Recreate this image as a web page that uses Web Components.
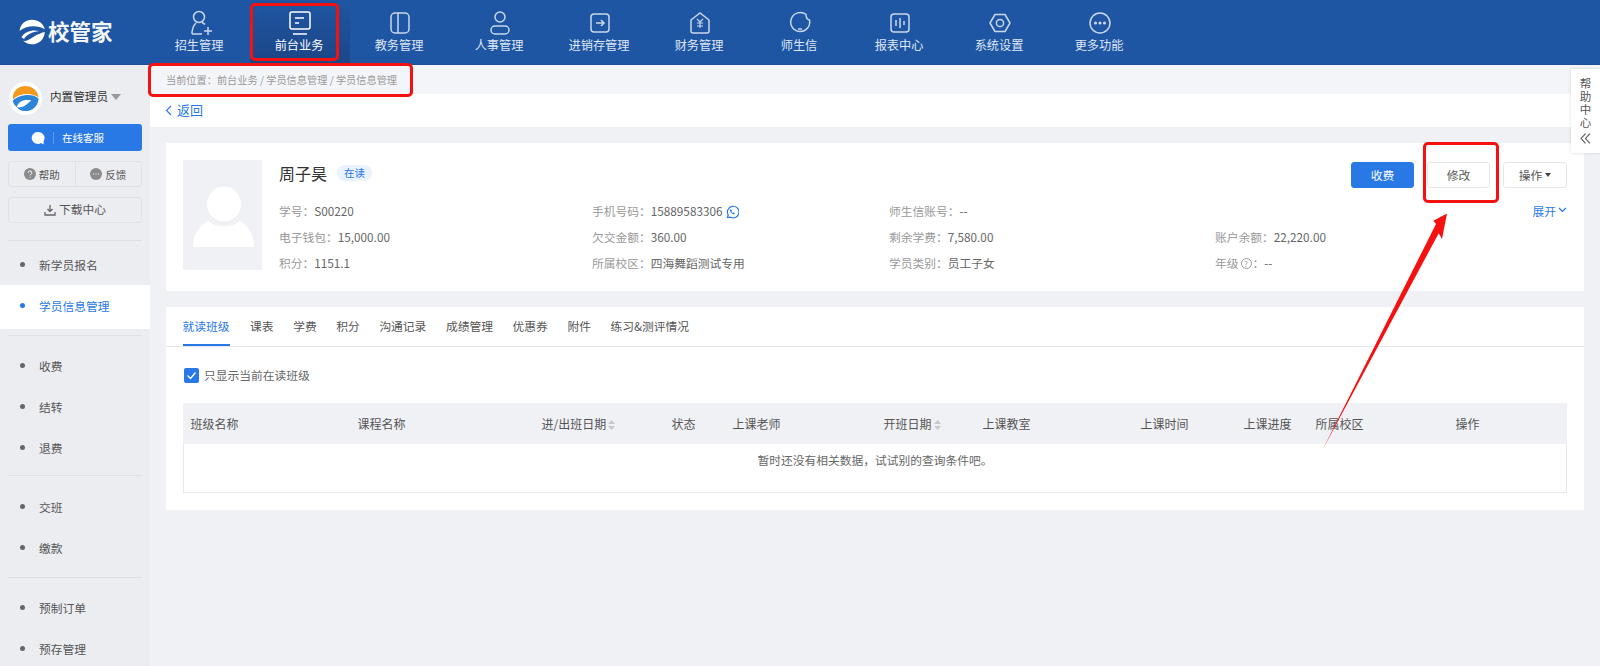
<!DOCTYPE html>
<html lang="zh"><head><meta charset="utf-8"><title>校管家</title>
<style>
html,body{margin:0;padding:0;height:666px;overflow:hidden;background:#f0f1f5;font-family:"Noto Sans CJK SC","Noto Sans",sans-serif;font-size:11.76px;color:#333}
#app{position:relative;display:grid;grid-template-columns:150px 1fr;grid-template-rows:65px 1fr;width:1600px;height:666px;overflow:hidden}
app-header{grid-column:1/3}
</style></head><body>
<div id="app">
<app-header></app-header>
<side-bar></side-bar>
<main-area></main-area>
<help-tab></help-tab>
<note-layer></note-layer>
</div>
<script>
const FONT='"Noto Sans CJK SC","Noto Sans",sans-serif';
const LOGO=`<path d="M3 16C3 8 10 3 17 3c7 0 13 4 14.500 11C24 9 10 9 3 16z" fill="#fff"/><path d="M31.500 17C31 26 24 31 17 31c-4 0-8-2-10-4 7 1 11-6 19-8 2-1 4-2 5.500-2z" fill="#fff"/><path d="M5 23c4-7 13-9 20-7-8 1-14 4-17 9z" fill="#fff"/>`;
const AVATAR=`<circle cx="17" cy="17" r="17" fill="#fff"/><path d="M4 16C4 9 10 4 17 4s13 5 13.500 12C24 11 11 11 4 18z" fill="#f39a1e"/><path d="M4 19c6-6 20-8 26.500-2C30 25 24 30 17 30c-3 0-7-1-9-4 7 1 10-3 15-7-6-1-13 0-15 7-2-2-4-4-4-7z" fill="#2c86d8"/>`;
const ICONS={
 add:`<circle cx="13" cy="8" r="5.500"/><path d="M6 25c0-4 1-8 4-11M16 13.500c1 .5 2 1 3 2M6 25h10M22 18v8M18 22h8"/>`,
 desk:`<rect x="4" y="3" width="20" height="17" rx="2"/><path d="M9 9h9M9 14h4M7 25h14"/>`,
 book:`<rect x="5" y="4" width="18" height="20" rx="4"/><path d="M12 4v20"/>`,
 user:`<circle cx="14" cy="8" r="5"/><rect x="5" y="17" width="18" height="8" rx="4"/>`,
 store:`<rect x="5" y="5" width="18" height="18" rx="3"/><path d="M10 14h8M15 11l3 3-3 3"/>`,
 money:`<path d="M5 11l9-7 9 7v11a2 2 0 0 1-2 2H7a2 2 0 0 1-2-2z"/><path d="M11 10l3 3 3-3M14 13v6M11 14h6M11 17h6" stroke-width="1.200"/>`,
 chat:`<path d="M20 5.500A9.500 9.500 0 1 0 23.500 11c-2-.5-3.500-3-3.500-5.500z"/><path d="M12 20h4"/>`,
 chart:`<rect x="5" y="5" width="18" height="18" rx="3"/><path d="M10 11v6M14 9v10M18 12v4"/>`,
 gear:`<path d="M9 5.500h10l5 8.500-5 8.500H9L4 14z" stroke-linejoin="round"/><circle cx="14" cy="14" r="3.600"/>`,
 more:`<circle cx="14" cy="14" r="10"/><circle cx="9.500" cy="14" r=".8"/><circle cx="14" cy="14" r=".8"/><circle cx="18.500" cy="14" r=".8"/>`
};
function def(name,css,html,init){
 customElements.define(name,class extends HTMLElement{
  connectedCallback(){ if(this.shadowRoot) return;
   const r=this.attachShadow({mode:'open'});
   const h=typeof html==='function'?html(this):html;
   r.innerHTML=`<style>${css}</style>${h}`;
   if(init) init(r,this);
  }
 });
}
def('nav-item',`
 :host{display:flex;flex-direction:column;align-items:center;width:100px;height:65px;box-sizing:border-box;padding-top:9px;color:#dfe7f3;font-size:12.200px;line-height:17px}
 :host([active]){background:linear-gradient(#1f56a3,#1c4686);color:#fff}
 svg{width:28px;height:28px;fill:none;stroke:#c9d7ec;stroke-width:1.500;display:block}
 :host([active]) svg{stroke:#fff}
 span{margin-left:-2px}
`,el=>`<svg viewBox="0 0 28 28">${ICONS[el.getAttribute('icon')]}</svg><span><slot></slot></span>`);
def('app-header',`
 :host{display:flex;background:#1f56a3;height:65px;box-shadow:inset 0 -1px 0 #1c4f98}
 .logo{width:150px;box-sizing:border-box;padding:17px 0 0 17px;display:flex;gap:1px;color:#f3f6fb;font:700 21.500px/28px ${FONT}}
 .logo svg{width:30px;height:30px}
`,`<div class="logo"><svg viewBox="0 0 34 34">${LOGO}</svg><span>校管家</span></div>
<nav-item icon="add">招生管理</nav-item><nav-item icon="desk" active>前台业务</nav-item><nav-item icon="book">教务管理</nav-item><nav-item icon="user">人事管理</nav-item><nav-item icon="store">进销存管理</nav-item><nav-item icon="money">财务管理</nav-item><nav-item icon="chat">师生信</nav-item><nav-item icon="chart">报表中心</nav-item><nav-item icon="gear">系统设置</nav-item><nav-item icon="more">更多功能</nav-item>`);
def('side-item',`
 :host{display:flex;align-items:center;height:41px;box-sizing:border-box;padding-left:20px;color:#555;font-size:11.760px}
 i{width:5px;height:5px;border-radius:50%;background:#666;margin-right:14px}
 :host([active]){background:#fff;color:#2878e6;height:44px;padding-bottom:3px}
 :host([active]) i{background:#2878e6}
`,`<i></i><slot></slot>`);
def('side-bar',`
 :host{display:block;background:#ecedf1;height:601px;overflow:hidden;color:#555}
 .user{display:flex;align-items:center;height:32px;margin:17px 0 10px 9px;gap:8px;color:#333;font-size:11.600px}
 .user svg{width:33px;height:33px}
 .user span{padding-bottom:5px;padding-top:0}
 .caret{display:inline-block;border:5px solid transparent;border-top:6px solid #999;border-bottom:0;margin-left:3px;vertical-align:middle}
 .btn{margin:0 8px;box-sizing:border-box;border-radius:3px}
 .cs{background:#2878e6;color:#fff;height:27px;display:flex;align-items:center;padding-left:23px;margin-bottom:10px}
 .cs svg{width:14px;height:14px;fill:#fff}.cs b{width:1px;height:12px;background:#5b9af0;margin:0 8px}
 .pair{display:flex;height:26px;border:1px solid #e0e1e6;margin-bottom:10px}
 .pair span{flex:1;display:flex;align-items:center;justify-content:center;gap:3px;font-size:10.500px}
 .pair span+span{border-left:1px solid #e0e1e6}
 .pair svg{width:12px;height:12px}
 .dl{height:26px;border:1px solid #e0e1e6;display:flex;align-items:center;justify-content:center;gap:3px;padding-bottom:3px}
 .dl svg{width:12px;height:12px;fill:none;stroke:#666;stroke-width:1.300;margin-top:2px}
 hr{border:0;border-top:1px solid #dfe0e5;margin:0 8px;height:0}
 .g0{margin-top:17px}
`,`<div class="user"><svg viewBox="0 0 34 34">${AVATAR}</svg><span>内置管理员<i class="caret"></i></span></div>
<div class="btn cs"><svg viewBox="0 0 14 14"><path d="M7 1a6 6 0 1 0 3 11l2.500 1.500.2-3.500A6 6 0 0 0 7 1z"/></svg><b></b><span style="font-size:10.500px">在线客服</span></div>
<div class="btn pair"><span><svg viewBox="0 0 12 12"><circle cx="6" cy="6" r="6" fill="#8b8b8b"/><path d="M4.200 4.700a1.800 1.800 0 1 1 2.600 1.600c-.6.300-.8.600-.8 1.100M6 8.800v.8" stroke="#fff" fill="none"/></svg>帮助</span><span><svg viewBox="0 0 12 12"><circle cx="6" cy="6" r="6" fill="#8b8b8b"/><path d="M3 6h1M5.500 6h1M8 6h1" stroke="#fff" stroke-width="1.200"/></svg>反馈</span></div>
<div class="btn dl"><svg viewBox="0 0 12 12"><path d="M6 1v6.500M3.500 5L6 7.500 8.500 5M1 8v3h10V8"/></svg>下载中心</div>
<div class="g0"><hr></div>
<div style="height:3px"></div>
<side-item>新学员报名</side-item><side-item active>学员信息管理</side-item>
<div style="height:6px"></div><hr><div style="height:9px"></div>
<side-item style="height:40px">收费</side-item><side-item style="height:42px">结转</side-item><side-item>退费</side-item>
<div style="height:7px"></div><hr><div style="height:10px"></div>
<side-item>交班</side-item><side-item>缴款</side-item>
<div style="height:9px"></div><hr><div style="height:8px"></div>
<side-item style="height:42px">预制订单</side-item><side-item>预存管理</side-item>`);
def('info-field',`
 :host{display:block;font-size:11.760px;line-height:17px;color:#666;white-space:nowrap}
 span{color:#999}
`,el=>`<span>${el.getAttribute('label')}：</span><slot></slot>`);
def('student-card',`
 :host{display:flex;background:#fff;height:148px;box-sizing:border-box;padding:17px 17px 0;position:relative}
 .ph{width:79px;height:110px;background:#f0f1f5;flex:none;margin-right:17px;display:block}
 .body{flex:1;min-width:0}
 .top{display:flex;align-items:center;height:26px}
 .name{font-size:16px;color:#333}
 .tag{margin-left:10px;font-size:10.500px;line-height:16px;height:16px;padding:0 7px;background:#eaf2fe;color:#2878e6;border-radius:8px}
 .acts{margin-left:auto;display:flex;gap:13px;margin-top:4px;color:#555;margin-right:1px}
 .b{width:63px;height:26px;box-sizing:border-box;border:1px solid #e6e7ec;border-radius:3px;display:flex;align-items:center;justify-content:center;color:#555;background:#fff;padding-bottom:2px}
 .b:last-child{width:64px;margin-right:-1px}
 .b.p{background:#2878e6;border-color:#2878e6;color:#fff}
 .b i{border:3px solid transparent;border-top:4px solid #444;border-bottom:0;margin-left:3px;margin-top:2px}
 .grid{display:grid;grid-template-columns:313px 297px 326px 1fr;grid-auto-rows:26px;margin-top:11px;align-items:center}
 .more{justify-self:end;color:#2878e6;display:flex;align-items:center;gap:2px}
 .more svg{width:9px;height:6px;fill:none;stroke:#2878e6;stroke-width:1.200}
 .ph2{width:14px;height:14px;margin-left:3px;vertical-align:-3px;fill:none;stroke:#2878e6;stroke-width:1.200}
 .q{display:inline-block;width:9px;height:9px;border:1px solid #999;border-radius:50%;font-size:8px;line-height:9px;text-align:center;vertical-align:1px;margin:0 1px 0 2px}
`,`<svg class="ph" viewBox="0 0 79 110"><rect width="79" height="110" fill="#f0f1f5"/><ellipse cx="41" cy="44" rx="17" ry="17.500" fill="#fff"/><path d="M10 87c0-12 6-21 15-26 7 7 25 7 32 0 9 5 14 14 14 26z" fill="#fff"/></svg>
<div class="body">
 <div class="top"><span class="name">周子昊</span><span class="tag">在读</span>
  <div class="acts"><div class="b p">收费</div><div class="b">修改</div><div class="b">操作<i></i></div></div></div>
 <div class="grid">
  <info-field label="学号">S00220</info-field>
  <info-field label="手机号码">15889583306<svg class="ph2" viewBox="0 0 14 14"><path d="M2.500 12.500l.7-2.500A5.800 5.800 0 1 1 5.500 12.200z"/><path d="M5 4.500c-.6 2 2 5 4.500 4.800l.4-1.200-1.500-.7-.6.6c-.7-.3-1.200-.9-1.400-1.600l.6-.5-.6-1.500z" fill="#2878e6" stroke="none"/></svg></info-field>
  <info-field label="师生信账号">--</info-field>
  <div class="more">展开<svg viewBox="0 0 9 6"><path d="M1 1l3.500 3.500L8 1"/></svg></div>
  <info-field label="电子钱包">15,000.00</info-field>
  <info-field label="欠交金额">360.00</info-field>
  <info-field label="剩余学费">7,580.00</info-field>
  <info-field label="账户余额">22,220.00</info-field>
  <info-field label="积分">1151.1</info-field>
  <info-field label="所属校区">四海舞蹈测试专用</info-field>
  <info-field label="学员类别">员工子女</info-field>
  <div style="color:#999;white-space:nowrap">年级<span class="q">?</span>：<span style="color:#666">--</span></div>
 </div>
</div>`);
const COLS='167px 184px 130px 61px 151px 99px 158px 103px 72px 140px 1fr';
def('data-table',`
 :host{display:block;margin:0 17px;font-size:12px;color:#555}
 .h{display:grid;grid-template-columns:${COLS};height:41px;background:#f0f1f5;align-items:center;padding-left:7.500px;padding-bottom:1px;box-sizing:border-box;white-space:nowrap}
 .s{display:inline-block;vertical-align:-1px;margin-left:2px;width:7px;height:10px}
 .e{height:49px;box-sizing:border-box;padding-bottom:17px;border:1px solid #e8e9ee;border-top:0;display:flex;align-items:center;justify-content:center;color:#666;font-size:11.760px}
`,()=>{const s='<svg class="s" viewBox="0 0 7 10"><path d="M3.500 0L7 4H0zM0 6h7l-3.500 4z" fill="#c6c8ce"/></svg>';
 return `<div class="h"><span>班级名称</span><span>课程名称</span><span>进/出班日期${s}</span><span>状态</span><span>上课老师</span><span>开班日期${s}</span><span>上课教室</span><span>上课时间</span><span>上课进度</span><span>所属校区</span><span>操作</span></div><div class="e">暂时还没有相关数据，试试别的查询条件吧。</div>`});
def('tab-panel',`
 :host{display:block;background:#fff;height:203px;margin-top:16px}
 .tabs{display:flex;gap:19.600px;height:39px;padding:0 16.500px;border-bottom:1px solid #e6e7ee;color:#555;font-size:11.760px;line-height:38px}
 .tabs span{height:39px;box-sizing:border-box;white-space:nowrap}
 .on{color:#2878e6;border-bottom:2px solid #2878e6;margin-right:1px}
 .chk{display:flex;align-items:center;height:16px;margin:20px 18px 20px;color:#666;font-size:11.760px;gap:5px}
 .chk span{padding-bottom:2px}
 .chk svg{width:15px;height:15px}
`,`<div class="tabs"><span class="on">就读班级</span><span>课表</span><span>学费</span><span>积分</span><span>沟通记录</span><span>成绩管理</span><span>优惠券</span><span>附件</span><span>练习&amp;测评情况</span></div>
<div class="chk"><svg viewBox="0 0 15 15"><rect width="15" height="15" rx="2" fill="#2878e6"/><path d="M3.500 7.500l3 3 5-6" fill="none" stroke="#fff" stroke-width="1.300"/></svg><span>只显示当前在读班级</span></div>
<data-table></data-table>`);
def('main-area',`
 :host{display:block;height:601px;overflow:hidden;background:#f0f1f5}
 .crumb{height:29px;background:#f4f5f8;padding-left:16px;color:#999;font-size:10.200px;line-height:30px}
 .back{height:33px;background:#fff;padding-left:15px;color:#2878e6;font-size:13px;line-height:33px;display:flex;align-items:center;gap:5px}
 .back svg{width:7px;height:11px;fill:none;stroke:#2878e6;stroke-width:1.100}
 .back span{padding-bottom:2px}
 .wrap{padding:16px 16px 0}
`,`<div class="crumb">当前位置：前台业务 / 学员信息管理 / 学员信息管理</div>
<div class="back"><svg viewBox="0 0 7 11"><path d="M6 1L1.500 5.500 6 10"/></svg><span>返回</span></div>
<div class="wrap"><student-card></student-card><tab-panel></tab-panel></div>`);
def('help-tab',`
 :host{position:absolute;left:1571px;top:69px;width:29px;height:84px;background:#fff;box-shadow:0 0 3px rgba(0,0,0,.15);box-sizing:border-box;padding-top:7.500px;text-align:center;color:#555;font-size:11.500px;line-height:13px}
 svg{width:11px;height:11px;display:block;margin:4px auto 0;fill:none;stroke:#555;stroke-width:1}
`,`帮<br>助<br>中<br>心<svg viewBox="0 0 10 10"><path d="M5 .5L1 5l4 4.500M9 .5L5 5l4 4.500"/></svg>`);
def('note-layer',`
 :host{position:absolute;inset:0;pointer-events:none}
 .r{position:absolute;box-sizing:border-box;border:3px solid #f5110f;border-radius:5px}
 svg{position:absolute;left:0;top:0}
`,`<div class="r" style="left:250px;top:3px;width:89px;height:58px"></div>
<div class="r" style="left:148px;top:63px;width:265px;height:34px"></div>
<div class="r" style="left:1423px;top:142px;width:76px;height:61px"></div>
<svg width="1600" height="666"><polygon points="1447,213.500 1442,239 1438.700,233.300 1322.700,449.500 1436,224 1433.300,220.700" fill="#f5110f"/></svg>`);
</script>
</body></html>
